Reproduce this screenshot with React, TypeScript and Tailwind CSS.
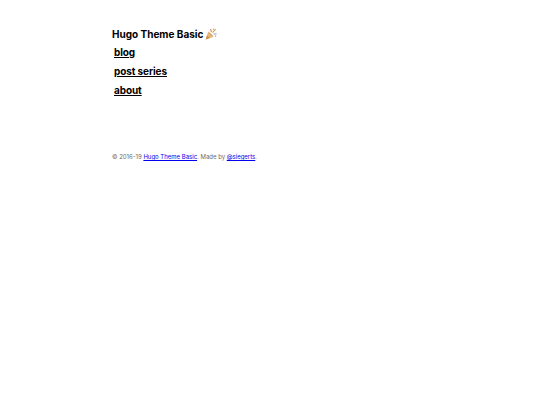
function PartyPopper() {
  return (
    <svg viewBox="0 0 12 12" className="ml-[2px] h-[12px] w-[12px]">
      <path d="M.6 11.6 3.2 3.4 8.8 8.8Z" fill="#e3b873" />
      <path d="M2 7.4 4.8 10 .6 11.6Z" fill="#c9924a" />
      <path d="M4.2 4.6 7.4 7.8" stroke="#d98f6a" strokeWidth="1" fill="none" />
      <path d="M5.6 .8 6.4 4.2" stroke="#df8a76" strokeWidth="1.2" fill="none" />
      <path d="M7.4 4.6 10.8 1.2" stroke="#d9a94f" strokeWidth="1.2" fill="none" />
      <path d="M8.4 6.2 11.6 5.6" stroke="#a9b8d6" strokeWidth="1.2" fill="none" />
      <circle cx="8.6" cy="1.4" r=".8" fill="#a8c08c" />
      <circle cx="10.6" cy="8" r=".8" fill="#e0907e" />
    </svg>
  )
}

export default function App() {
  return (
    <div className="min-h-[420px] bg-white pl-[112px] pt-[25px] font-['Inter',sans-serif] text-black">
      <header className="flex h-[18px] items-center text-[10px] font-bold">
        <span>Hugo Theme Basic</span>
        <PartyPopper />
      </header>
      <nav className="flex flex-col pl-[2px] text-[10px] font-bold tracking-[-0.01em]">
        <a href="#" className="leading-[19px] underline">blog</a>
        <a href="#" className="leading-[19px] underline">post series</a>
        <a href="#" className="leading-[19px] underline">about</a>
      </nav>
      <footer className="mt-[51px] text-[6px] leading-[12px] text-[#6b6b6b]">
        © 2016-19 <a href="#" className="text-[#0000ee] underline">Hugo Theme Basic</a>. Made by <a href="#" className="text-[#0000ee] underline">@siegerts</a>.
      </footer>
    </div>
  )
}
